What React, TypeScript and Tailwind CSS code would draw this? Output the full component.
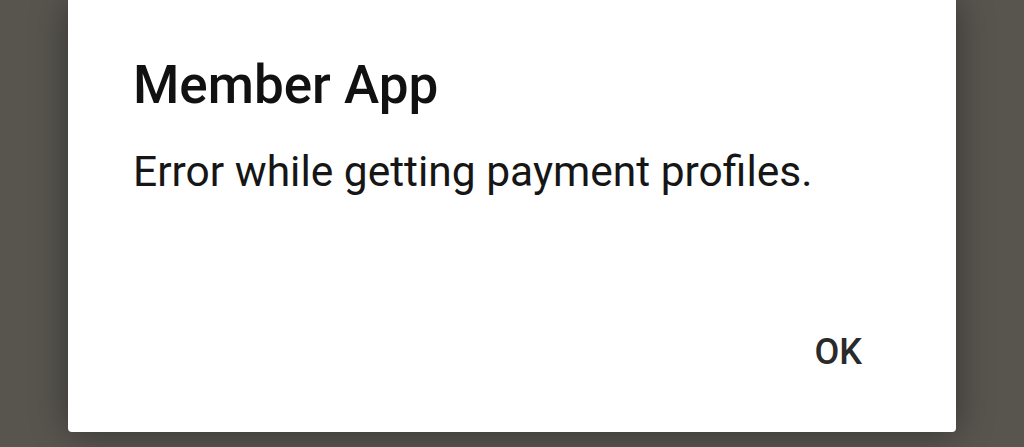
export default function App() {
  return (
    <div className="h-[447px] w-[1024px] overflow-hidden bg-[#58554f] font-['Roboto',sans-serif]">
      <div className="ml-[68px] flex h-[432px] w-[888px] flex-col rounded-b-[4px] bg-white shadow-[0_0_36px_rgba(0,0,0,0.4)]">
        <div className="px-[65px] pt-[55px]">
          <h1 className="text-[53px] font-medium leading-[60px] text-[#111111]">
            Member App
          </h1>
          <p className="mt-[32px] text-[42.5px] leading-[50px] text-[#161616]">
            Error while getting payment profiles.
          </p>
        </div>
        <div className="mt-auto flex justify-end pb-[58px] pr-[94px]">
          <button className="text-[36px] font-medium leading-[44px] text-[#2a2a2a]">
            OK
          </button>
        </div>
      </div>
    </div>
  );
}
